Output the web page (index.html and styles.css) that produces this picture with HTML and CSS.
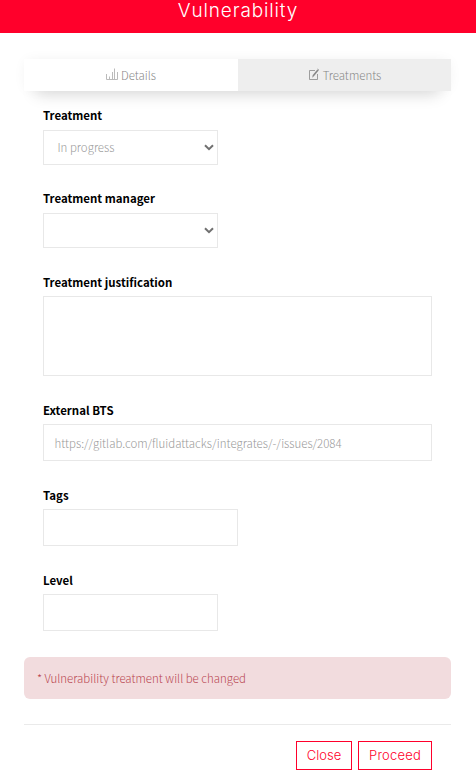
FILE: index.html
```html
<!DOCTYPE html>
<html lang="en">
<head>
<meta charset="utf-8">
<title>Vulnerability</title>
<link rel="stylesheet" href="styles.css">
</head>
<body>
<header class="modal-header"><h1 class="title">Vulnerability</h1></header>
<main class="modal-body">
  <nav class="tabs">
    <a class="tab">
      <svg class="icon icon-bars" viewBox="0 0 12 12" fill="none" stroke="currentColor"><path d="M.5 6v5.500h11V4M3.500 11V8.500M6.500 11V4M8.500 11V.5"/></svg>
      <span>Details</span>
    </a>
    <a class="tab tab-active">
      <svg class="icon" viewBox="0 0 12 12" fill="none" stroke="currentColor" stroke-width=".8"><path d="M7 2.500H1.500v9h8V6"/><path d="M5 8l5-6" stroke-width="1.700"/><path d="M4 9l1.500-.5M9.500 1l1.500 1.200"/></svg>
      <span>Treatments</span>
    </a>
  </nav>
  <form class="form">
    <div class="field"><label class="label">Treatment</label>
      <div class="control select"><span class="value v-progress">In progress</span><svg class="chevron" viewBox="0 0 10 7"><path d="M1 1.200l4 4 4-4"/></svg></div></div>
    <div class="field"><label class="label">Treatment manager</label>
      <div class="control select"><svg class="chevron" viewBox="0 0 10 7"><path d="M1 1.200l4 4 4-4"/></svg></div></div>
    <div class="field"><label class="label label-low">Treatment justification</label><div class="control area"></div></div>
    <div class="field"><label class="label label-low">External BTS</label><div class="control wide"><span class="value">https://gitlab.com/fluidattacks/integrates/-/issues/2084</span></div></div>
    <div class="field"><label class="label label-low">Tags</label><div class="control tags"></div></div>
    <div class="field"><label class="label label-low">Level</label><div class="control level"></div></div>
  </form>
  <div class="alert"><span>* Vulnerability treatment will be changed</span></div>
  <footer class="footer">
    <button class="button">Close</button>
    <button class="button proceed">Proceed</button>
  </footer>
</main>
</body>
</html>
```
FILE: styles.css
```css
* { box-sizing: border-box; }
body { margin: 0; height: 773px; overflow: hidden; background: #fff; color: #000; font: 300 11.46px/20px "Noto Sans CJK SC", "Open Sans", sans-serif; }
.modal-header { height: 33px; background: #ff002b; color: #fff; text-align: center; }
.title { margin: 0; font: 300 19px/21px Inter, sans-serif; letter-spacing: .85px; }
.modal-body { padding: 26px 25px 0 24px; }
.tabs { display: flex; height: 32px; box-shadow: 0 0 14px -3px #00000014, 0 14px 16px -12px #00000038; }
.tab { display: flex; flex: 0 0 214px; align-items: center; justify-content: center; gap: 3px; background: #fff; color: #888; }
.tab-active { flex: 1; background: #eee; }
.icon { width: 12px; height: 12px; margin-top: -2px; }
.icon-bars { color: #bbb; }
.form { padding: 14px 19px 0; }
.field { margin-bottom: 23px; }
.label { display: block; width: max-content; height: 20px; margin-bottom: 5px; font-weight: 700; white-space: nowrap; }
.label-low { line-height: 22px; }
.control { display: flex; align-items: center; border: 1px solid #e8e8e8; height: 37px; color: #999; white-space: nowrap; }
.select { width: 175px; height: 35px; justify-content: flex-end; padding: 0 3px 0 13.5px; }
.v-progress { margin-right: auto; padding-bottom: 1px; }
.chevron { width: 10px; height: 7px; fill: none; stroke: #707070; stroke-width: 2; }
.area { height: 80px; }
.wide { padding-left: 10.5px; }
.tags { width: 195px; }
.level { width: 175px; }
.alert { display: flex; align-items: center; height: 42px; margin-top: 26px; padding-left: 13px; border-radius: 6px; background: #f2dcde; color: #b94650; }
.field:last-child { margin-bottom: 0; }
.footer { display: flex; justify-content: flex-end; gap: 6px; margin-top: 25px; padding: 16px 19px 0; border-top: 1px solid #eaeaea; }
.button { width: 56px; height: 29px; padding: 0 0 2px; border: 1px solid #ff002b; background: #fff; color: #ff002b; font: 300 13px/20px Inter, sans-serif; letter-spacing: .05px; }
.proceed { width: 74px; letter-spacing: .2px; }
```
